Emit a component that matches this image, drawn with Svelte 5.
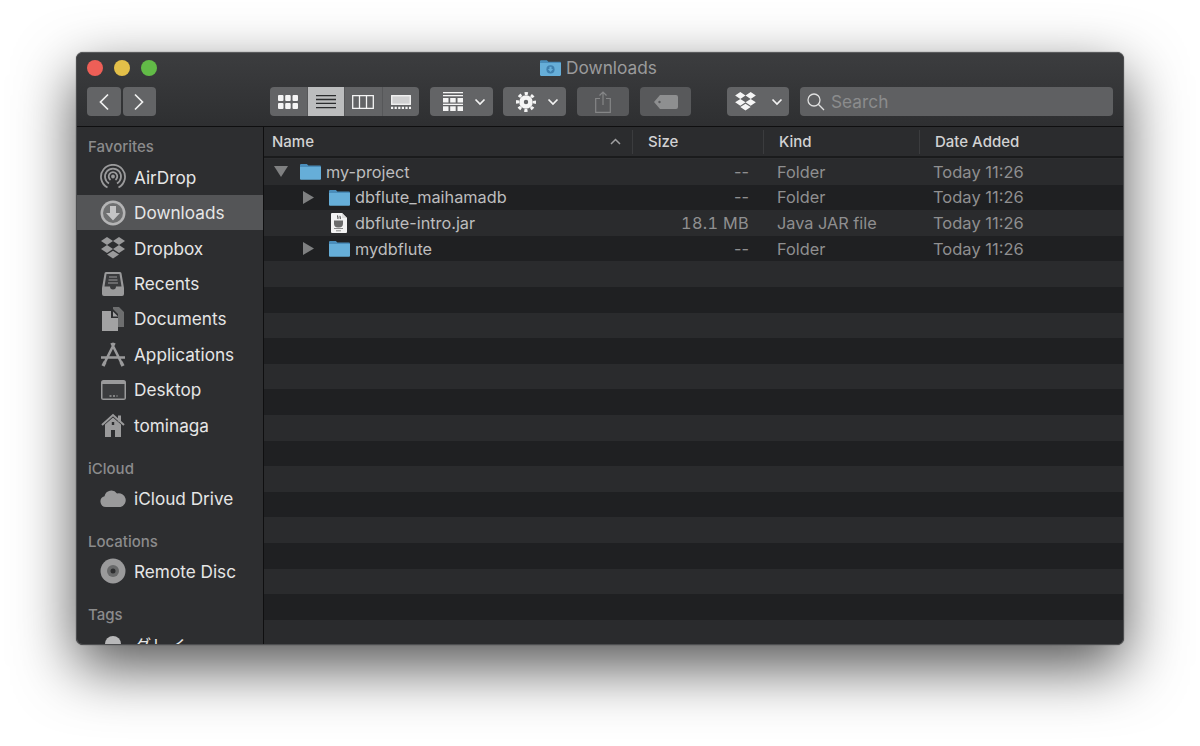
<script>
  const rows = [
    { name: 'my-project', depth: 0, arrow: 'down', icon: 'folder', size: '--', kind: 'Folder', date: 'Today 11:26' },
    { name: 'dbflute_maihamadb', depth: 1, arrow: 'right', icon: 'folder', size: '--', kind: 'Folder', date: 'Today 11:26' },
    { name: 'dbflute-intro.jar', depth: 1, arrow: '', icon: 'jar', size: '18.1 MB', kind: 'Java JAR file', date: 'Today 11:26' },
    { name: 'mydbflute', depth: 1, arrow: 'right', icon: 'folder', size: '--', kind: 'Folder', date: 'Today 11:26' }
  ];
  const blanks = Array.from({ length: 15 });
</script>

{#snippet chevron()}
  <svg class="chev" width="12" height="8" viewBox="0 0 12 8"><path d="M1.500 1.500 6 6l4.500-4.500" fill="none" stroke="#f2f2f2" stroke-width="1.700"/></svg>
{/snippet}

{#snippet dropbox(w, h, color)}
  <svg width={w} height={h} viewBox="0 0 24 22"><path fill={color} d="M6 0 0 4l6 4 6-4zM18 0l-6 4 6 4 6-4zM0 12l6 4 6-4-6-4zM24 12l-6-4-6 4 6 4zM6 17.500l6 4 6-4-6-3.800z"/></svg>
{/snippet}

{#snippet folder(w)}
  <svg width={w} height={w * 0.8} viewBox="0 0 20 16"><path fill="#4a8dba" d="M0 2a1 1 0 0 1 1-1h5.500l1.500 1.500h11a1 1 0 0 1 1 1V6H0z"/><path fill="#66aed8" d="M0 3.800h20V15a1 1 0 0 1-1 1H1a1 1 0 0 1-1-1z"/></svg>
{/snippet}

{#snippet sideItem(label, selected)}
  <div class="side-item" class:selected>
    <span class="side-icon">
      {#if label === 'AirDrop'}
        <svg width="26" height="26" viewBox="0 0 26 26" fill="none" stroke="#9a9a9b" stroke-width="1.800"><path d="M7.500 23.500a12 12 0 1 1 11 0"/><path d="M9 19.500a8 8 0 1 1 8 0"/><path d="M10.500 16a4.300 4.300 0 1 1 5 0"/><circle cx="13" cy="12.500" r="1" fill="#9a9a9b"/></svg>
      {:else if label === 'Downloads'}
        <svg width="26" height="26" viewBox="0 0 26 26"><circle cx="13" cy="13" r="12.500" fill="#b4b4b5"/><circle cx="13" cy="13" r="10" fill="#6f7071"/><path fill="#c4c4c5" d="M10 6h6v7h4l-7 7.500L6 13h4z"/></svg>
      {:else if label === 'Dropbox'}
        {@render dropbox(24, 22, '#9a9a9b')}
      {:else if label === 'Recents'}
        <svg width="22" height="24" viewBox="0 0 22 24"><path fill="#9a9a9b" d="M4 0h14a1.500 1.500 0 0 1 1.500 1.500L22 16v6a2 2 0 0 1-2 2H2a2 2 0 0 1-2-2v-6L2.500 1.500A1.500 1.500 0 0 1 4 0z"/><path fill="#3a3b3d" d="M4.500 2h13l2 12.500H14a3 3 0 0 1-6 0H2.500z"/><path stroke="#9a9a9b" stroke-width="1.200" d="M7 5h8M6.500 8h9M6 11h10"/></svg>
      {:else if label === 'Documents'}
        <svg width="22" height="24" viewBox="0 0 22 24"><path fill="#6d6e6f" d="M11 0h6l5 5v15h-6V7l-5-5z"/><path fill="#a2a2a3" d="M0 4h9v7h7v13H0z"/><path fill="#a2a2a3" d="M11 4.500l5 5h-5z"/></svg>
      {:else if label === 'Applications'}
        <svg width="26" height="25" viewBox="0 0 26 25" fill="none" stroke="#9a9a9b" stroke-width="2.600"><path d="M14.500 1 4.500 21M11.500 1 21.500 21M1 15.500h24"/><path stroke-width="3.400" d="M3 24l2-4M23 24l-2-4"/></svg>
      {:else if label === 'Desktop'}
        <svg width="25" height="20" viewBox="0 0 25 20"><rect width="25" height="20" rx="2.500" fill="#9a9a9b"/><rect x="1.500" y="4" width="22" height="14.500" fill="#3b3c3e"/><path stroke="#9a9a9b" stroke-width="1.500" stroke-dasharray="2 1.500" d="M8.500 16h8"/></svg>
      {:else if label === 'tominaga'}
        <svg width="24" height="24" viewBox="0 0 24 24"><path fill="none" stroke="#9a9a9b" stroke-width="2" d="M1 12 12 2l11 10"/><path fill="#9a9a9b" d="M17 2.500h3v6h-3zM4 11.500 12 4.500l8 7V24h-6v-7h-4v7H4z"/><rect x="10.800" y="9" width="2.400" height="3" fill="#2d2e30"/></svg>
      {:else if label === 'iCloud Drive'}
        <svg width="26" height="18" viewBox="0 0 26 18"><path fill="#9a9a9b" d="M6 18a5.500 5.500 0 0 1-1.500-10.800A7 7 0 0 1 17 4.500 6.800 6.800 0 0 1 20.500 18z"/></svg>
      {:else}
        <svg width="26" height="26" viewBox="0 0 26 26"><circle cx="13" cy="13" r="12.500" fill="#9a9a9b"/><circle cx="13" cy="13" r="6" fill="#68696a"/><circle cx="13" cy="13" r="2.500" fill="#2d2e30"/></svg>
      {/if}
    </span>
    <span>{label}</span>
  </div>
{/snippet}

<div class="page">
  <div class="window">
    <header class="toolbar">
      <div class="titlebar">
        <div class="lights">
          <span class="light red"></span>
          <span class="light yellow"></span>
          <span class="light green"></span>
        </div>
        <div class="title">
          <svg width="21" height="17" viewBox="0 0 20 16"><path fill="#4a8dba" d="M0 2a1 1 0 0 1 1-1h5.500l1.500 1.500h11a1 1 0 0 1 1 1V6H0z"/><path fill="#66aed8" d="M0 3.800h20V15a1 1 0 0 1-1 1H1a1 1 0 0 1-1-1z"/><circle cx="10" cy="9.800" r="3.900" fill="#3f7fad"/><path fill="#66aed8" d="M9 7.300h2v2.200h1.500L10 12.300 7.500 9.500H9z"/></svg>
          <span>Downloads</span>
        </div>
      </div>

      <div class="tools">
        <div class="nav">
          <button class="btn nav-btn" aria-label="Back"><svg width="12" height="18" viewBox="0 0 12 18"><path d="M10 1.500 2.500 9l7.500 7.500" fill="none" stroke="#f0f0f0" stroke-width="1.700"/></svg></button>
          <button class="btn nav-btn" aria-label="Forward"><svg width="12" height="18" viewBox="0 0 12 18"><path d="M2 1.500 9.500 9 2 16.500" fill="none" stroke="#f0f0f0" stroke-width="1.700"/></svg></button>
        </div>

        <div class="views">
          <button class="view" aria-label="Icons">
            <svg width="20" height="14" viewBox="0 0 20 14"><g fill="#f5f5f5"><rect width="5.500" height="6" rx="1"/><rect x="7.200" width="5.500" height="6" rx="1"/><rect x="14.500" width="5.500" height="6" rx="1"/><rect y="8" width="5.500" height="6" rx="1"/><rect x="7.200" y="8" width="5.500" height="6" rx="1"/><rect x="14.500" y="8" width="5.500" height="6" rx="1"/></g></svg>
          </button>
          <button class="view active" aria-label="List">
            <svg width="20" height="14" viewBox="0 0 20 14"><path stroke="#2b2c2e" stroke-width="1.300" d="M0 .700h20M0 4.500h20M0 8.300h20M0 12.700h20"/></svg>
          </button>
          <button class="view" aria-label="Columns">
            <svg width="22" height="14" viewBox="0 0 22 14"><path fill="none" stroke="#f5f5f5" stroke-width="1.300" d="M.700.700h20.600v12.600H.700zM7.500.700v12.600M14.500.700v12.600"/></svg>
          </button>
          <button class="view" aria-label="Gallery">
            <svg width="20" height="14" viewBox="0 0 20 14"><rect x=".700" y=".700" width="18.600" height="8.600" fill="#d0d0d1" stroke="#f5f5f5" stroke-width="1.300"/><path stroke="#f5f5f5" stroke-width="2.200" stroke-dasharray="2.200 1.400" d="M0 12.800h20"/></svg>
          </button>
        </div>

        <button class="btn menu arrange" aria-label="Arrange">
          <svg width="20" height="19" viewBox="0 0 20 19"><g fill="#f5f5f5"><rect width="20" height="1.300"/><rect y="3" width="20" height="1.300"/><rect y="6" width="5.500" height="4.500"/><rect x="7.200" y="6" width="5.500" height="4.500"/><rect x="14.500" y="6" width="5.500" height="4.500"/><rect y="11.700" width="20" height="1.300"/><rect y="14.300" width="5.500" height="4.700"/><rect x="7.200" y="14.300" width="5.500" height="4.700"/><rect x="14.500" y="14.300" width="5.500" height="4.700"/></g></svg>
          {@render chevron()}
        </button>

        <button class="btn menu action" aria-label="Action">
          <svg width="20" height="20" viewBox="0 0 20 20" fill="none" stroke="#f5f5f5"><circle cx="10" cy="10" r="4.500" stroke-width="4.600"/><circle cx="10" cy="10" r="8.500" stroke-width="3" stroke-dasharray="3.300 3.376" stroke-dashoffset="1.650"/></svg>
          {@render chevron()}
        </button>

        <button class="btn share dim" aria-label="Share">
          <svg width="16" height="22" viewBox="0 0 16 22" fill="none" stroke="#858687" stroke-width="1.200"><path d="M5 7.500H.700v13.800h14.600V7.500H11M8 14V1M4.500 4.500 8 1l3.500 3.500"/></svg>
        </button>

        <button class="btn tag dim" aria-label="Tag">
          <svg width="24" height="14" viewBox="0 0 24 14"><path fill="#8e8f90" fill-rule="evenodd" d="M6 0h16a2 2 0 0 1 2 2v10a2 2 0 0 1-2 2H6L0 7zM5.500 5.800a1.200 1.200 0 1 0 0 2.400 1.200 1.200 0 0 0 0-2.400z"/></svg>
        </button>

        <button class="btn menu box" aria-label="Dropbox">
          {@render dropbox(21, 19, '#f5f5f5')}
          {@render chevron()}
        </button>

        <div class="search">
          <svg width="18" height="18" viewBox="0 0 18 18" fill="none" stroke="#e0e0e0" stroke-width="1.300"><circle cx="7" cy="7" r="6"/><path d="m11.300 11.300 5.700 5.700"/></svg>
          <span>Search</span>
        </div>
      </div>
    </header>

    <div class="body">
      <aside class="sidebar">
        <div class="side-head first">Favorites</div>
        {@render sideItem('AirDrop', false)}
        {@render sideItem('Downloads', true)}
        {@render sideItem('Dropbox', false)}
        {@render sideItem('Recents', false)}
        {@render sideItem('Documents', false)}
        {@render sideItem('Applications', false)}
        {@render sideItem('Desktop', false)}
        {@render sideItem('tominaga', false)}
        <div class="side-head">iCloud</div>
        {@render sideItem('iCloud Drive', false)}
        <div class="side-head">Locations</div>
        {@render sideItem('Remote Disc', false)}
        <div class="side-head">Tags</div>
        <div class="side-item tag-item">
          <span class="side-icon"><span class="dot"></span></span>
          <span>グレイ</span>
        </div>
      </aside>

      <main class="files">
        <div class="head">
          <div class="hcell name-head">
            <span>Name</span>
            <svg width="11" height="7" viewBox="0 0 11 7"><path d="M1 6 5.500 1.500 10 6" fill="none" stroke="#a0a0a1" stroke-width="1.500"/></svg>
          </div>
          <div class="hcell">Size</div>
          <div class="hcell">Kind</div>
          <div class="hcell">Date Added</div>
        </div>

        <div class="list">
          {#each rows as row}
            <div class="row">
              <div class="name" style="padding-left: {10 + row.depth * 29}px">
                <span class="arrow">
                  {#if row.arrow === 'down'}
                    <svg width="14" height="11" viewBox="0 0 14 11"><path d="M0 0h14L7 11z" fill="#7f8081"/></svg>
                  {:else if row.arrow === 'right'}
                    <svg width="11" height="13" viewBox="0 0 11 13"><path d="M0 0l11 6.500L0 13z" fill="#7f8081"/></svg>
                  {/if}
                </span>
                <span class="ficon">
                  {#if row.icon === 'folder'}
                    {@render folder(21)}
                  {:else}
                    <svg width="16" height="20" viewBox="0 0 16 20"><path fill="#f2f2f2" d="M1 0h10l5 5v14a1 1 0 0 1-1 1H1a1 1 0 0 1-1-1V1a1 1 0 0 1 1-1z"/><path fill="#dcdcdc" d="M11 0l5 5h-5z"/><path fill="none" stroke="#555" stroke-width="1.200" d="M7 2.500c-1.500 1.200 1 1.800-.3 3.500M9.300 3c-1 1 .7 1.500-.2 3"/><path fill="#6b6b6b" d="M3 7.500h9v3a4 4 0 0 1-4 4H7a4 4 0 0 1-4-4z"/><path stroke="#8a8a8a" d="M3 15.500h9M5 17.800h5"/></svg>
                  {/if}
                </span>
                <span class="fname">{row.name}</span>
              </div>
              <div class="size" class:num={row.size !== '--'}>{row.size}</div>
              <div class="kind">{row.kind}</div>
              <div class="date">{row.date}</div>
            </div>
          {/each}
          {#each blanks as _}
            <div class="row"></div>
          {/each}
        </div>
      </main>
    </div>
  </div>
</div>

<style>
  :global(body) {
    margin: 0;
    background: #fff;
  }

  .page {
    width: 1200px;
    height: 746px;
    box-sizing: border-box;
    padding: 52px 76px 101px;
    overflow: hidden;
    font-family: Inter, "Noto Sans CJK JP", sans-serif;
  }

  .window {
    height: 593px;
    box-sizing: border-box;
    display: flex;
    flex-direction: column;
    border: 1px solid #4c4d4f;
    border-top-color: #5a5b5d;
    border-radius: 7px;
    background: #2d2e30;
    box-shadow: 0 22px 60px rgba(0, 0, 0, 0.68), 0 0 1px rgba(0, 0, 0, 0.8);
    overflow: hidden;
  }

  .toolbar {
    height: 74px;
    flex: none;
    box-sizing: border-box;
    padding: 0 10px 0 10px;
    background: linear-gradient(#3c3d3f, #2e2f31);
    border-bottom: 1px solid #0f0f10;
  }

  .titlebar {
    height: 34px;
    box-sizing: border-box;
    padding-bottom: 5px;
    display: grid;
    grid-template-columns: 1fr auto 1fr;
    align-items: center;
  }

  .lights {
    display: flex;
    gap: 11px;
  }

  .light {
    width: 16px;
    height: 16px;
    border-radius: 50%;
  }

  .red { background: #ee5f57; }
  .yellow { background: #e3bf49; }
  .green { background: #62bb47; }

  .title {
    display: flex;
    align-items: center;
    gap: 5px;
    padding-right: 3px;
    color: #9b9b9c;
    font-size: 17.300px;
  }

  .tools {
    display: flex;
    height: 29px;
  }

  button {
    border: 0;
    padding: 0;
    font: inherit;
  }

  .btn {
    display: flex;
    align-items: center;
    justify-content: center;
    height: 29px;
    border-radius: 4px;
    background: #636466;
  }

  .nav {
    display: flex;
    gap: 2px;
  }

  .nav-btn {
    width: 33.500px;
  }

  .views {
    display: flex;
    width: 149px;
    margin-left: 114px;
    border-radius: 4px;
    overflow: hidden;
  }

  .view {
    flex: 1;
    display: flex;
    align-items: center;
    justify-content: center;
    background: #636466;
    border-right: 1px solid #565759;
  }

  .view:last-child {
    border-right: 0;
  }

  .view.active {
    background: #bcbdbe;
  }

  .menu {
    width: 63px;
    justify-content: flex-start;
    gap: 11px;
    margin-left: 11px;
    padding-left: 13px;
  }

  .action {
    margin-left: 10px;
  }

  .dim {
    background: #58595b;
  }

  .share {
    width: 52px;
    margin-left: 11px;
  }

  .tag {
    width: 51px;
    margin-left: 11px;
  }

  .box {
    width: 62px;
    margin-left: 36px;
    padding-left: 8px;
    gap: 15px;
  }

  .search {
    flex: 1;
    display: flex;
    align-items: center;
    gap: 6px;
    margin-left: 11px;
    padding-left: 7px;
    border-radius: 4px;
    background: #5f6062;
    color: #8b8c8d;
    font-size: 17.300px;
  }

  .body {
    flex: 1;
    min-height: 0;
    display: flex;
  }

  .sidebar {
    width: 187px;
    flex: none;
    box-sizing: border-box;
    border-right: 1px solid #0f0f10;
    color: #e6e6e6;
    font-size: 17.200px;
    overflow: hidden;
  }

  .side-head {
    height: 22px;
    line-height: 22px;
    margin-top: 15px;
    margin-bottom: 0.500px;
    padding-left: 11px;
    color: #8b8b8c;
    font-size: 15px;
    font-weight: 500;
  }

  .side-head.first {
    margin-top: 9px;
    margin-bottom: 1.500px;
  }

  .side-item {
    height: 35.450px;
    display: flex;
    align-items: center;
    gap: 8px;
    padding-left: 23px;
  }

  .side-item.selected {
    background: #545557;
  }

  .side-icon {
    width: 26px;
    display: flex;
    align-items: center;
    justify-content: center;
  }

  .dot {
    width: 16px;
    height: 16px;
    border-radius: 50%;
    background: #b8b8b9;
  }

  .files {
    flex: 1;
    min-width: 0;
    display: flex;
    flex-direction: column;
  }

  .head {
    height: 31px;
    flex: none;
    box-sizing: border-box;
    display: grid;
    grid-template-columns: 369px 131px 156px 1fr;
    align-items: center;
    background: #2b2c2e;
    border-bottom: 2px solid #1a1b1c;
    color: #d2d2d3;
    font-size: 15px;
    font-weight: 500;
  }

  .hcell {
    height: 24px;
    display: flex;
    align-items: center;
    padding-left: 15px;
    border-right: 1px solid #3b3c3e;
  }

  .hcell:last-child {
    border-right: 0;
  }

  .name-head {
    justify-content: space-between;
    padding: 0 11px 0 8px;
  }

  .list {
    flex: 1;
    min-height: 0;
    overflow: hidden;
    margin-top: 1px;
  }

  .row {
    height: 25.600px;
    display: grid;
    grid-template-columns: 368px 117px 1fr 190px;
    align-items: center;
    background: #2a2b2d;
    color: #8f8f90;
    font-size: 16.300px;
  }

  .row:nth-child(even) {
    background: #1f2022;
  }

  .name {
    display: flex;
    align-items: center;
  }

  .arrow {
    width: 26px;
    display: flex;
    align-items: center;
  }

  .ficon {
    width: 26px;
    display: flex;
    align-items: center;
    justify-content: center;
    margin-left: -3px;
  }

  .fname {
    margin-left: 3px;
    color: #bdbdbe;
  }

  .size {
    text-align: right;
  }

  .size.num {
    font-variant-numeric: tabular-nums;
    letter-spacing: 0.3px;
  }

  .kind {
    padding-left: 28px;
  }

  .date {
    font-size: 16.500px;
  }
</style>
